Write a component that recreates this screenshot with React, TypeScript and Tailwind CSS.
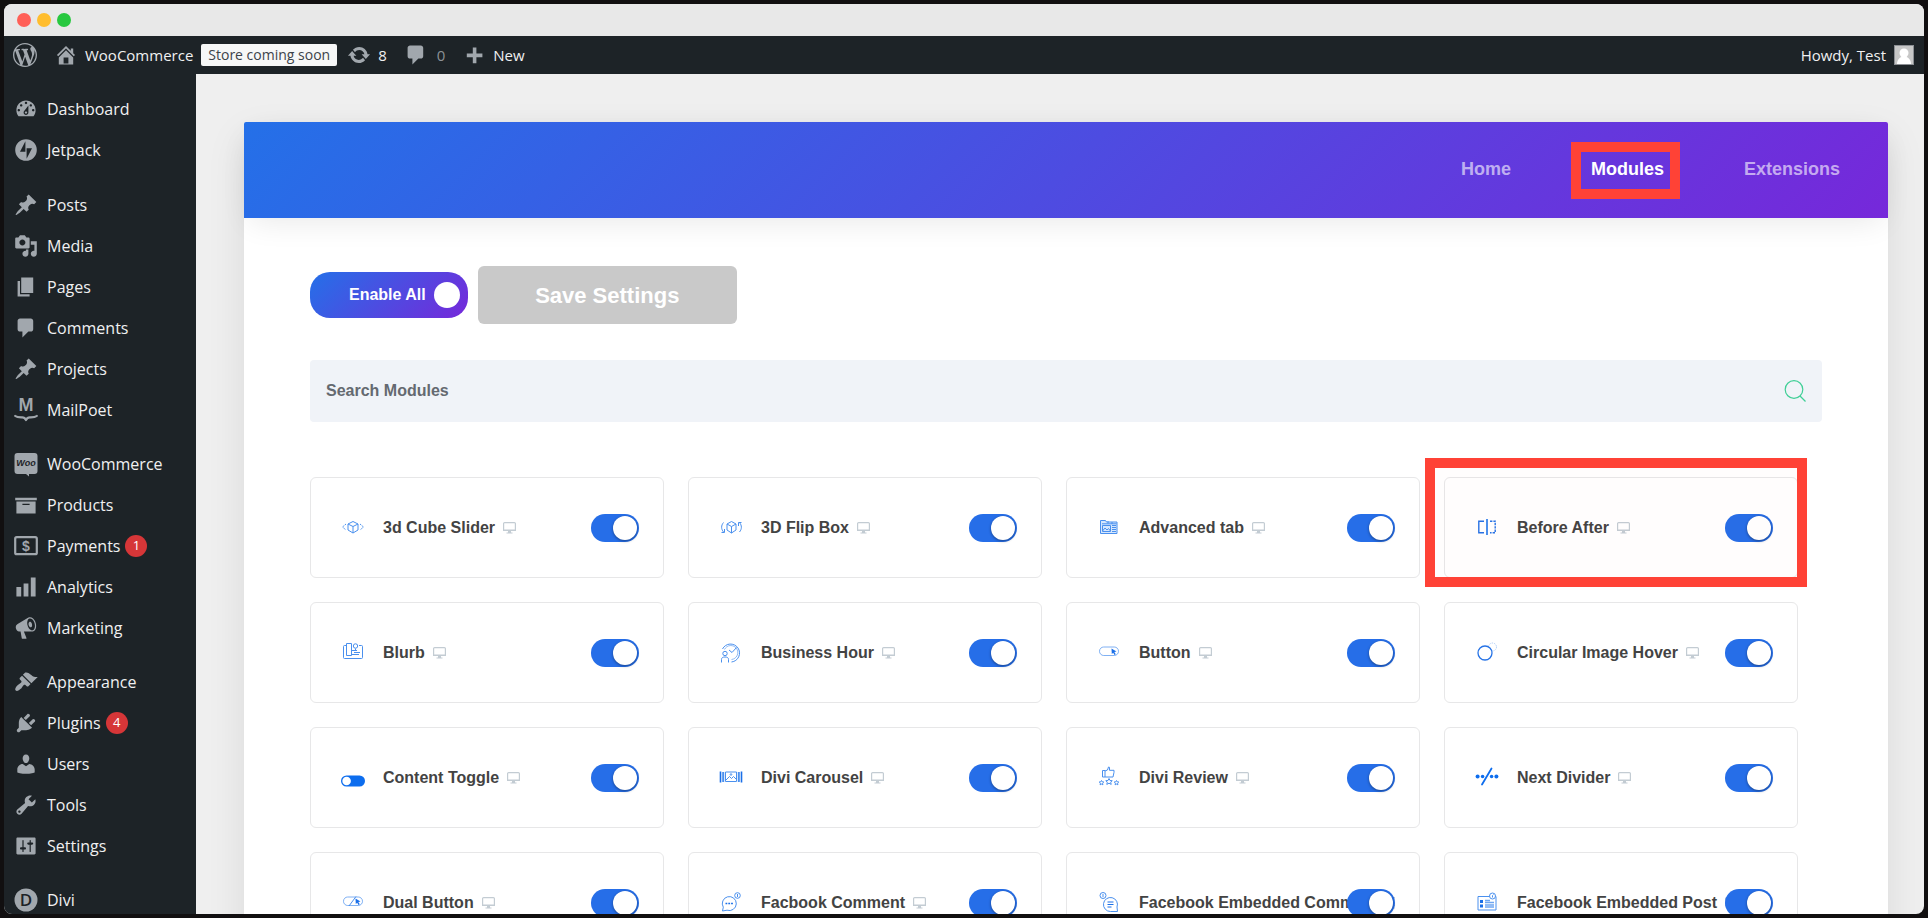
import { useId } from 'react'
import type { ReactNode } from 'react'

type MenuItem = { label: string; icon: ReactNode; badge?: number }
type Module = { name: string; icon: ReactNode; highlighted?: boolean }

const HOME = 'M16 8.5l1.53 1.53-1.06 1.06L10 4.6l-6.47 6.49-1.06-1.06L10 2.5l4 4v-2h2v4zm-6-2.46l6 5.99V18H4v-5.97zM12 17v-5H8v5h4z'
const UPDATE =
  'M10.2 3.28c3.53 0 6.43 2.61 6.92 6h2.08l-3.5 4-3.5-4h2.32c-.45-1.97-2.21-3.45-4.32-3.45-1.45 0-2.73.71-3.54 1.78L4.95 5.66C6.23 4.2 8.11 3.28 10.2 3.28zm-.4 13.44c-3.52 0-6.43-2.61-6.92-6H.8l3.5-4c1.17 1.33 2.33 2.67 3.5 4H5.48c.45 1.97 2.21 3.45 4.32 3.45 1.45 0 2.73-.71 3.54-1.78l1.71 1.95c-1.28 1.46-3.15 2.38-5.25 2.38z'
const COMMENT = 'M5 2h9c1.1 0 2 .9 2 2v7c0 1.1-.9 2-2 2h-2l-5 5v-5H5c-1.1 0-2-.9-2-2V4c0-1.1.9-2 2-2z'
const PLUS = 'M17 8.8v3h-5v5H9v-5H4v-3h5v-5h3v5z'
const WORDPRESS =
  'M20 10c0-5.51-4.49-10-10-10C4.48 0 0 4.49 0 10c0 5.52 4.48 10 10 10 5.51 0 10-4.48 10-10zM7.78 15.37L4.37 6.22c.55-.02 1.17-.08 1.17-.08.5-.06.44-1.13-.06-1.11 0 0-1.45.11-2.37.11-.18 0-.37 0-.58-.01C4.12 2.69 6.87 1.11 10 1.11c2.33 0 4.45.87 6.05 2.34-.68-.11-1.65.39-1.65 1.58 0 .74.45 1.36.9 2.1.35.61.55 1.36.55 2.46 0 1.49-1.4 5-1.4 5l-3.03-8.37c.54-.02.82-.17.82-.17.5-.05.44-1.25-.06-1.22 0 0-1.44.12-2.38.12-.87 0-2.33-.12-2.33-.12-.5-.03-.56 1.2-.06 1.22l.92.08 1.26 3.41zM17.41 10c.24-.64.74-1.87.43-4.25.7 1.29 1.05 2.71 1.05 4.25 0 3.29-1.73 6.24-4.4 7.78.97-2.59 1.94-5.2 2.92-7.78zM6.1 18.09C3.12 16.65 1.11 13.53 1.11 10c0-1.3.23-2.48.72-3.59C3.25 10.3 4.67 14.2 6.1 18.09zm4.03-6.63l2.58 6.98c-.86.29-1.76.45-2.71.45-.79 0-1.57-.11-2.29-.33.81-2.38 1.62-4.74 2.42-7.1z'
const DASHBOARD =
  'M3.76 16h12.48c1.1-1.37 1.76-3.11 1.76-5 0-4.42-3.58-8-8-8s-8 3.58-8 8c0 1.89.66 3.63 1.76 5zM10 4c.55 0 1 .45 1 1s-.45 1-1 1-1-.45-1-1 .45-1 1-1zM6 6c.55 0 1 .45 1 1s-.45 1-1 1-1-.45-1-1 .45-1 1-1zm8 0c.55 0 1 .45 1 1s-.45 1-1 1-1-.45-1-1 .45-1 1-1zm-5.37 5.55L12 7v6c0 1.1-.9 2-2 2s-2-.9-2-2c0-.57.24-1.08.63-1.45zM4 10c.55 0 1 .45 1 1s-.45 1-1 1-1-.45-1-1 .45-1 1-1zm12 0c.55 0 1 .45 1 1s-.45 1-1 1-1-.45-1-1 .45-1 1-1zm-5 3c0-.55-.45-1-1-1s-1 .45-1 1 .45 1 1 1 1-.45 1-1z'
const JETPACK = 'M10 1a9 9 0 100 18 9 9 0 000-18zM9.5 11.5H5L9.5 2.8zm1 5.7V8.5H15z'
const PIN =
  'M10.44 3.02l1.82-1.82 6.36 6.35-1.83 1.82c-1.05-.68-2.48-.57-3.41.36l-.75.75c-.92.93-1.04 2.35-.35 3.41l-1.83 1.82-2.41-2.41-2.8 2.79c-.42.42-3.38 2.71-3.8 2.29s1.86-3.39 2.28-3.81l2.79-2.79L4.1 9.36l1.83-1.82c1.05.69 2.48.57 3.4-.36l.75-.75c.93-.92 1.05-2.35.36-3.41z'
const MEDIA =
  'M13 11V4c0-.55-.45-1-1-1h-1.67L9 1H5L3.67 3H2c-.55 0-1 .45-1 1v7c0 .55.45 1 1 1h10c.55 0 1-.45 1-1zM7 4.5c1.38 0 2.5 1.12 2.5 2.5S8.38 9.5 7 9.5 4.5 8.38 4.5 7 5.62 4.5 7 4.5zM14 6h5v10.5c0 1.38-1.12 2.5-2.5 2.5S14 17.88 14 16.5s1.12-2.5 2.5-2.5c.17 0 .34.02.5.05V9h-3V6zm-4 8.05V13h2v3.5c0 1.38-1.12 2.5-2.5 2.5S7 17.88 7 16.5 8.12 14 9.5 14c.17 0 .34.02.5.05z'
const PAGES = 'M6 15V2h10v13H6zm-1 1h8v2H3V5h2v11z'
const ARCHIVE = 'M19 4v2H1V4h18zM2 7h16v10H2V7zm11 3V9H7v1h6z'
const CHART = 'M18 18V2h-4v16h4zm-6 0V7H8v11h4zm-6 0v-8H2v8h4z'
const MEGAPHONE =
  'M18.15 5.94c.46 1.62.38 3.22-.02 4.48-.42 1.28-1.26 2.18-2.3 2.48-.16.06-.26.06-.4.06-.06.02-.12.02-.18.02-.06.02-.14.02-.22.02h-6.8l2.22 5.5c.02.14-.06.26-.14.34-.08.1-.24.16-.34.16H6.95c-.1 0-.26-.06-.34-.16-.08-.08-.16-.2-.14-.34l-1-5.5H4.25l-.02-.02c-.5.06-1.08-.18-1.54-.62s-.88-1.08-1.06-1.88c-.24-.8-.2-1.56-.02-2.2.18-.62.58-1.08 1.06-1.3l.02-.02 9-5.4c.1-.06.18-.1.24-.16.06-.04.14-.08.24-.12.16-.08.28-.12.5-.18 1.04-.3 2.24.1 3.22.98s1.84 2.24 2.26 3.86zm-2.58 5.98h-.02c.4-.1.74-.34 1.04-.7.58-.7.86-1.76.86-3.04 0-.64-.1-1.3-.28-1.98-.34-1.36-1.02-2.5-1.78-3.24s-1.68-1.1-2.46-.88c-.82.22-1.4.96-1.7 2-.32 1.04-.28 2.36.06 3.72.38 1.36 1 2.5 1.8 3.24.78.74 1.62 1.1 2.48.88zm-2.54-7.08c.22-.04.42-.02.62.04.38.16.76.48 1.02 1s.42 1.2.42 1.78c0 .3-.04.56-.12.8-.18.48-.44.84-.86.94-.34.1-.8-.06-1.14-.4s-.64-.86-.78-1.5c-.18-.62-.12-1.24.02-1.72s.48-.84.82-.94z'
const BRUSH =
  'M14.48 11.06L7.41 3.99l1.5-1.5c.5-.56 2.3-.47 3.51.32 1.21.8 1.43 1.28 2.91 2.1 1.18.64 2.45 1.26 4.45.85zm-.71.71L6.7 4.7 4.93 6.47c-.39.39-.39 1.02 0 1.41l1.06 1.06c.39.39.39 1.03 0 1.42-.6.6-1.43 1.11-2.21 1.69-.35.26-.7.53-1.01.84C1.43 14.23.4 16.08 1.4 17.07c.99 1 2.84-.03 4.18-1.36.31-.31.58-.66.85-1.02.57-.78 1.08-1.61 1.69-2.21.39-.39 1.02-.39 1.41 0l1.06 1.06c.39.39 1.02.39 1.41 0z'
const PLUG =
  'M13.11 4.36L9.87 7.6 8 5.73l3.24-3.24c.35-.34 1.05-.2 1.56.32.52.51.66 1.21.31 1.55zm-8 1.77l.91-1.12 9.01 9.01-1.19.84c-.71.71-2.63 1.16-3.82 1.16H6.14L4.9 17.26c-.59.59-1.54.59-2.12 0-.59-.58-.59-1.53 0-2.12l1.24-1.24v-3.88c0-1.13.4-3.19 1.09-3.89zm7.26 3.97l3.24-3.24c.34-.35 1.04-.21 1.55.31.52.51.66 1.21.31 1.55l-3.24 3.25z'
const USER =
  'M10 9.25c-2.27 0-2.73-3.44-2.73-3.44C7 4.02 7.82 2 9.97 2c2.16 0 2.98 2.02 2.71 3.81 0 0-.41 3.44-2.68 3.44zm0 2.57L12.72 10c2.39 0 4.52 2.33 4.52 4.53v2.49s-3.65 1.13-7.24 1.13c-3.65 0-7.24-1.13-7.24-1.13v-2.49c0-2.25 1.94-4.48 4.47-4.48z'
const WRENCH =
  'M16.68 9.77c-1.34 1.34-3.3 1.67-4.95.99l-5.41 6.52c-.99.99-2.59.99-3.58 0s-.99-2.59 0-3.57l6.52-5.42c-.68-1.65-.35-3.61.99-4.95 1.28-1.28 3.12-1.62 4.72-1.06l-2.89 2.89 2.82 2.82 2.86-2.87c.53 1.58.18 3.39-1.08 4.65zM3.81 16.21c.4.39 1.04.39 1.43 0 .4-.4.4-1.04 0-1.43-.39-.4-1.03-.4-1.43 0-.39.39-.39 1.03 0 1.43z'
const SLIDERS =
  'M18 16V4c0-.55-.45-1-1-1H3c-.55 0-1 .45-1 1v12c0 .55.45 1 1 1h14c.55 0 1-.45 1-1zM8 11h1c.55 0 1 .45 1 1s-.45 1-1 1H8v1.5c0 .28-.22.5-.5.5s-.5-.22-.5-.5V13H6c-.55 0-1-.45-1-1s.45-1 1-1h1V5.5c0-.28.22-.5.5-.5s.5.22.5.5V11zm5-2h-1c-.55 0-1-.45-1-1s.45-1 1-1h1V5.5c0-.28.22-.5.5-.5s.5.22.5.5V7h1c.55 0 1 .45 1 1s-.45 1-1 1h-1v5.5c0 .28-.22.5-.5.5s-.5-.22-.5-.5V9z'

function Dashicon({ d }: { d: string }) {
  return (
    <svg viewBox="0 0 20 20" className="size-6 shrink-0 fill-[#a1a7ad]" fillRule="evenodd" aria-hidden>
      <path d={d} />
    </svg>
  )
}

function MenuArt({ children }: { children: ReactNode }) {
  return (
    <svg viewBox="0 0 24 24" className="size-6 shrink-0 overflow-visible fill-[#a1a7ad]" aria-hidden>
      {children}
    </svg>
  )
}

/* Thin blue line art shown at the left of each module card */
function Art({ children }: { children: ReactNode }) {
  return (
    <svg viewBox="0 0 24 24" className="size-6 shrink-0" fill="none" stroke="#4a90ee" strokeWidth="1" aria-hidden>
      {children}
    </svg>
  )
}

const MENU: MenuItem[][] = [
  [
    { label: 'Dashboard', icon: <Dashicon d={DASHBOARD} /> },
    { label: 'Jetpack', icon: <Dashicon d={JETPACK} /> },
  ],
  [
    { label: 'Posts', icon: <Dashicon d={PIN} /> },
    { label: 'Media', icon: <Dashicon d={MEDIA} /> },
    { label: 'Pages', icon: <Dashicon d={PAGES} /> },
    { label: 'Comments', icon: <Dashicon d={COMMENT} /> },
    { label: 'Projects', icon: <Dashicon d={PIN} /> },
    {
      label: 'MailPoet',
      icon: (
        <MenuArt>
          <text x="12" y="13" textAnchor="middle" className="font-['Liberation_Sans',sans-serif] text-[18px] font-bold">
            M
          </text>
          <path
            d="M1.200 18c2 1.600 4.500 1.400 7 1.400 2 0 3 1 3.800 2.600.8-1.600 1.800-2.600 3.800-2.600 2.500 0 5 .2 7-1.400"
            fill="none"
            stroke="#a1a7ad"
            strokeWidth="2.200"
            strokeLinecap="round"
            strokeLinejoin="round"
          />
        </MenuArt>
      ),
    },
  ],
  [
    {
      label: 'WooCommerce',
      icon: (
        <MenuArt>
          <path d="M3.500 1h17a3 3 0 0 1 3 3v15a3 3 0 0 1-3 3H15v2.500L12 22H3.500a3 3 0 0 1-3-3V4a3 3 0 0 1 3-3z" />
          <text x="12" y="14" textAnchor="middle" className="fill-[#1d2327] font-['Liberation_Sans',sans-serif] text-[9px] font-bold italic">
            Woo
          </text>
        </MenuArt>
      ),
    },
    { label: 'Products', icon: <Dashicon d={ARCHIVE} /> },
    {
      label: 'Payments',
      badge: 1,
      icon: (
        <MenuArt>
          <rect x="1.200" y="3.200" width="21.600" height="17" rx="1.500" fill="none" stroke="#a1a7ad" strokeWidth="2.200" />
          <text x="12" y="17" textAnchor="middle" className="font-['Liberation_Sans',sans-serif] text-[14px] font-bold">
            $
          </text>
        </MenuArt>
      ),
    },
    { label: 'Analytics', icon: <Dashicon d={CHART} /> },
    { label: 'Marketing', icon: <Dashicon d={MEGAPHONE} /> },
  ],
  [
    { label: 'Appearance', icon: <Dashicon d={BRUSH} /> },
    { label: 'Plugins', badge: 4, icon: <Dashicon d={PLUG} /> },
    { label: 'Users', icon: <Dashicon d={USER} /> },
    { label: 'Tools', icon: <Dashicon d={WRENCH} /> },
    { label: 'Settings', icon: <Dashicon d={SLIDERS} /> },
  ],
  [
    {
      label: 'Divi',
      icon: (
        <MenuArt>
          <circle cx="12" cy="12" r="11.500" />
          <text x="12" y="18" textAnchor="middle" className="fill-[#1d2327] font-['Open_Sans',sans-serif] text-[17px] font-semibold">
            D
          </text>
        </MenuArt>
      ),
    },
  ],
]

const MODULES: Module[] = [
  {
    name: '3d Cube Slider',
    icon: (
      <Art>
        <path d="M12 5.500l5 2.500v6l-5 3-5-3V8zM7 8l5 2.500L17 8M12 10.500V17" />
        <path d="M5 8l-3.500 3L5 14M19 8l3.500 3-3.500 3" strokeDasharray="1.500 .8" />
      </Art>
    ),
  },
  {
    name: '3D Flip Box',
    icon: (
      <Art>
        <path d="M12.500 5.500l4.500 2.500v6l-4.500 3L8 14V8zM8 8l4.500 2.500L17 8M12.500 10.500V17" />
        <path d="M4.500 6.500c-2.500 3-2.500 6.500 0 9.500M5.500 13v3.500h-3M20.500 6.500c2.500 3 2.500 6.500 0 9.500M19.500 10V6.500h3" />
      </Art>
    ),
  },
  {
    name: 'Advanced tab',
    icon: (
      <Art>
        <path d="M3.500 4.500h5l1 1.500h10.500v11.500H3.500z" fill="#d6e7fd" />
        <path d="M5.500 9.500h8v6h-8zM5.500 15l2.500-3 2 2 1.500-1.500 2 2.500M15 9.500h4M15 11.500h4M15 13.500h4M15 15.500h4M11 5v2.500M15 6v2M5 7.800h14.500" />
      </Art>
    ),
  },
  {
    name: 'Before After',
    highlighted: true,
    icon: (
      <Art>
        <g stroke="#2673e6" strokeWidth="1.400">
          <path d="M9 5.200H3.800v11.600H9" />
          <path d="M15 5.200h5.200v11.600H15" strokeDasharray="2.400 1" />
          <path d="M12 3v16" strokeWidth="2" stroke="#4a90ee" />
        </g>
      </Art>
    ),
  },
  {
    name: 'Blurb',
    icon: (
      <Art>
        <path d="M5 4.500H3.500a1 1 0 0 0-1 1v11a1 1 0 0 0 1 1h17a1 1 0 0 0 1-1v-11a1 1 0 0 0-1-1H18" />
        <path d="M5.500 2.500h5v12h-5z" />
        <circle cx="14.500" cy="5" r="2.200" />
        <path d="M11 9.500h5M13 11.500h6M11 13.500h7M14.500 7.500v2" />
      </Art>
    ),
  },
  {
    name: 'Business Hour',
    icon: (
      <Art>
        <path d="M3.500 8a9 9 0 1 1 9 13" />
        <path d="M5.500 8.500a7 7 0 1 1 7 10" strokeOpacity=".6" />
        <path d="M10 9l3 2.500 4.500-5" />
        <circle cx="6" cy="12.500" r="2.200" />
        <path d="M2.500 21.500v-3c0-2 1.500-2.500 3.500-2.500s3.500.5 3.500 2.500v3" />
      </Art>
    ),
  },
  {
    name: 'Button',
    icon: (
      <Art>
        <rect x="2.500" y="6" width="19" height="8.500" rx="4.200" strokeOpacity=".7" />
        <path d="M14.500 7.500l5 3-2.200.5 1.500 2.200-1.300.8-1.300-2.200-1.400 1.200z" fill="#1a6fe8" stroke="none" />
      </Art>
    ),
  },
  {
    name: 'Circular Image Hover',
    icon: (
      <Art>
        <circle cx="17.500" cy="6" r="4" strokeOpacity=".4" strokeDasharray="1.500 1" />
        <circle cx="10" cy="12" r="7" fill="#fff" stroke="#2673e6" strokeWidth="1.300" />
      </Art>
    ),
  },
  {
    name: 'Content Toggle',
    icon: (
      <Art>
        <rect x="0" y="9.500" width="24" height="11" rx="5.500" fill="#0d6dee" stroke="none" />
        <circle cx="5.600" cy="15" r="4.300" fill="#fff" stroke="none" />
      </Art>
    ),
  },
  {
    name: 'Divi Carousel',
    icon: (
      <Art>
        <path d="M6.500 6h11v9.500h-11zM7 14l3.500-3.500 2 2 2-2L17 13" />
        <circle cx="12" cy="8.500" r=".8" />
        <path d="M1.500 5.500v11M22.500 5.500v11" stroke="#1a6fe8" strokeWidth="1.600" />
        <path d="M4.200 6v10M19.800 6v10" strokeWidth="2" />
      </Art>
    ),
  },
  {
    name: 'Divi Review',
    icon: (
      <Art>
        <path d="M5.500 4.500H8V11H5.500zM8 5l2.500-1 1-3 1 .3v3H17v2L16 11H8" />
        <path d="M12 12.500l1 2 2.200.2-1.500 1.500.5 2.200-2.200-1.200-2.200 1.200.5-2.200-1.500-1.500 2.200-.2z" />
        <path d="M4.500 14.500l.7 1.300 1.600.2-1.200 1.200.3 1.600-1.400-.7-1.400.7.3-1.600L2.200 16l1.600-.2zM19.500 14.500l.7 1.300 1.600.2-1.200 1.200.3 1.600-1.400-.7-1.400.7.3-1.600-1.200-1.200 1.600-.2z" />
      </Art>
    ),
  },
  {
    name: 'Next Divider',
    icon: (
      <Art>
        <g fill="#0d6dee" stroke="none">
          <circle cx="2.600" cy="10.500" r="2" />
          <circle cx="7.600" cy="10.500" r="1.800" />
          <circle cx="16.600" cy="10.500" r="1.800" />
          <circle cx="21.400" cy="10.500" r="2" />
        </g>
        <path d="M7 18.500l9.500-16" stroke="#0d6dee" strokeWidth="1.800" strokeLinecap="round" />
      </Art>
    ),
  },
  {
    name: 'Dual Button',
    icon: (
      <Art>
        <rect x="2.500" y="6" width="19" height="8.500" rx="4.200" strokeOpacity=".7" />
        <path d="M8 15l7-9.500" />
        <path d="M14.500 7.500l5 3-2.200.5 1.500 2.200-1.300.8-1.300-2.200-1.400 1.200z" fill="#1a6fe8" stroke="none" />
      </Art>
    ),
  },
  {
    name: 'Facbook Comment',
    icon: (
      <Art>
        <path d="M3.500 20l.8-3.800A7 7 0 1 1 8 19.200z" />
        <path d="M6.500 12.500h1.800M9.300 12.500h1.800M12.100 12.500h1.800" stroke="#1a6fe8" strokeWidth="1.600" />
        <circle cx="18.500" cy="4.500" r="2.800" />
        <path d="M18.500 3v3" />
      </Art>
    ),
  },
  {
    name: 'Facebook Embedded Comment',
    icon: (
      <Art>
        <path d="M20.500 20.500h-7A7 7 0 1 1 20 16z" />
        <path d="M10.500 11h6M10.500 13.500h6M10.500 16h4" stroke="#1a6fe8" />
        <circle cx="6" cy="4.500" r="3" />
        <path d="M6 3v3" />
      </Art>
    ),
  },
  {
    name: 'Facebook Embedded Post',
    icon: (
      <Art>
        <path d="M3 5.500h18V19H3z" />
        <path d="M5 9h3v3H5zM5 13.500h3v3H5z" fill="#1a6fe8" stroke="none" />
        <path d="M10 9.500h5M10 11.500h9M10 14h9M10 16h9" strokeOpacity=".8" strokeWidth="1.400" />
        <circle cx="17.500" cy="5" r="3" fill="#fff" />
        <path d="M17.500 6.500v-2l1-1" />
      </Art>
    ),
  },
]

function AdminBar() {
  return (
    <header className="flex h-[38px] shrink-0 items-center bg-[#1d2327] pr-[10px] pl-[9px] text-[15px] text-[#f0f0f1]">
      <a href="#about" aria-label="About WordPress">
        <Dashicon d={WORDPRESS} />
      </a>
      <a href="#site" className="ml-[17px] flex items-center gap-[7px]">
        <Dashicon d={HOME} />
        WooCommerce
      </a>
      <a href="#visibility" className="ml-2 rounded-xs bg-[#f6f7f7] px-[7px] text-[14px] leading-[22px] font-medium text-[#3c434a]">
        Store coming soon
      </a>
      <a href="#updates" className="ml-[10px] flex items-center gap-[7px]">
        <Dashicon d={UPDATE} />8
      </a>
      <a href="#comments" className="ml-[17px] flex items-center gap-[9px] text-[#8c9196]">
        <Dashicon d={COMMENT} />0
      </a>
      <a href="#new" className="ml-[17px] flex items-center gap-[7px]">
        <Dashicon d={PLUS} />
        New
      </a>
      <a href="#profile" className="ml-auto flex items-center gap-2">
        Howdy, Test
        <svg viewBox="0 0 20 20" className="size-5" aria-hidden>
          <path d="M0 0h20v20H0z" fill="#8c8f94" />
          <path d="M1 1h18v18H1z" fill="#c7c7c7" />
          <circle cx="10" cy="8" r="4.500" fill="#fff" />
          <path d="M3 19c0-4 2.500-6.500 4.500-7h5c2 .5 4.500 3 4.500 7z" fill="#fff" />
        </svg>
      </a>
    </header>
  )
}

function Sidebar() {
  return (
    <nav className="flex w-48 shrink-0 flex-col gap-[13px] overflow-hidden bg-[#1d2327] pt-[14px] text-base text-[#f0f0f1]">
      {MENU.map((group, i) => (
        <ul key={i} className="first:mb-px">
          {group.map((item) => (
            <li key={item.label}>
              <a href={`#${item.label.toLowerCase()}`} className="flex h-[41px] items-center pl-[10px]">
                {item.icon}
                <span className="ml-[9px]">{item.label}</span>
                {item.badge && (
                  <span className="ml-[5px] flex size-[22px] items-center justify-center rounded-full bg-[#d63638] text-[13px] text-white">
                    {item.badge}
                  </span>
                )}
              </a>
            </li>
          ))}
        </ul>
      ))}
    </nav>
  )
}

function ModuleCard({ name, icon, highlighted }: Module) {
  const id = useId()
  return (
    <div className="relative flex h-[101px] items-center rounded-md border border-[#e7e7e8] pr-6 pl-[30px]">
      {icon}
      <div className="ml-[18px] flex min-w-0 flex-1 items-center gap-2 overflow-hidden">
        <label htmlFor={id} className="whitespace-nowrap">
          {name}
        </label>
        <svg viewBox="0 0 13 12" className="h-3 w-[13px] shrink-0" aria-hidden>
          <path d="M1.600.6h9.800a1 1 0 0 1 1 1v6.900H.6V1.600a1 1 0 0 1 1-1z" fill="none" stroke="#c3ccd3" strokeWidth="1.200" />
          <path d="M.5 7.500h12V9H.5zM5 9h3v1.500h1.500v1h-6v-1H5z" fill="#c3ccd3" />
        </svg>
      </div>
      {/* the switch sits on top of long names */}
      <input
        id={id}
        type="checkbox"
        role="switch"
        defaultChecked
        className="relative -ml-12 h-7 w-12 shrink-0 cursor-pointer appearance-none rounded-full bg-[#c9c9c9] before:absolute before:top-0.5 before:left-0.5 before:size-6 before:rounded-full before:bg-white before:shadow-[0_1px_3px_rgba(0,0,0,0.4)] checked:bg-[#266ee8] checked:before:left-[22px]"
      />
      {highlighted && (
        <div
          aria-hidden
          className="pointer-events-none absolute -top-5 -right-[10px] -bottom-[10px] -left-5 border-[10px] border-[#ff4236] bg-[#ff4236]/1"
        />
      )}
    </div>
  )
}

export default function App() {
  return (
    <div className="h-screen bg-[#110f10] p-1 font-['Open_Sans','Noto_Sans',sans-serif]">
      <div className="flex h-full flex-col overflow-hidden rounded-lg bg-[#efefef]">
        <div className="flex h-8 shrink-0 items-center gap-[6px] bg-[#e8e8e8] px-[13px]">
          <span className="size-[14px] rounded-full bg-[#ff5f57]" />
          <span className="size-[14px] rounded-full bg-[#ffbd2e]" />
          <span className="size-[14px] rounded-full bg-[#28c840]" />
        </div>
        <AdminBar />
        <div className="flex min-h-0 flex-1">
          <Sidebar />
          <main className="min-w-0 flex-1 overflow-hidden pt-12 pr-9 pl-12 font-['Liberation_Sans',Arial,sans-serif] font-bold">
            <div className="min-h-full rounded-t-xs bg-white shadow-[0_15px_40px_rgba(0,0,0,0.09)]">
              <nav className="flex h-24 items-center justify-end gap-20 rounded-t-xs bg-[linear-gradient(135deg,#2470e8,#7628da)] px-12 pb-0.5 text-lg text-white/60 shadow-[0_10px_30px_-6px_rgba(0,0,0,0.09)]">
                <a href="#home">Home</a>
                <a href="#modules" aria-current="page" className="relative text-white">
                  Modules
                  <span
                    aria-hidden
                    className="pointer-events-none absolute -top-[13px] -right-4 -bottom-4 -left-5 border-[10px] border-[#ff4236]"
                  />
                </a>
                <a href="#extensions">Extensions</a>
              </nav>

              <div className="px-[66px] pt-12">
                <div className="flex items-center gap-[10px]">
                  <label className="flex h-[46px] cursor-pointer items-center gap-2 rounded-[20px] bg-[linear-gradient(135deg,#2470e8,#7628da)] pr-2 pl-[39px] text-base text-white">
                    Enable All
                    <input type="checkbox" defaultChecked className="size-[26px] cursor-pointer appearance-none rounded-full bg-white" />
                  </label>
                  <button type="button" className="h-[58px] w-[259px] rounded-md bg-[#c9c9c9] text-[22px] text-white">
                    Save Settings
                  </button>
                </div>

                <div className="mt-9 flex h-[62px] items-center rounded-sm bg-[#f0f3f8] pr-4 pl-4">
                  <input
                    type="search"
                    aria-label="Search Modules"
                    placeholder="Search Modules"
                    className="flex-1 text-base outline-none placeholder:text-[#646970]"
                  />
                  <svg viewBox="0 0 22 22" className="size-[22px]" fill="none" stroke="#3fcf96" strokeWidth="1.200" aria-hidden>
                    <circle cx="10" cy="9.500" r="8.800" />
                    <path d="M16 16l5.500 5.500" />
                  </svg>
                </div>

                <div className="mt-[55px] grid grid-cols-4 gap-6 pr-6 text-base text-[#434343]">
                  {MODULES.map((module) => (
                    <ModuleCard key={module.name} {...module} />
                  ))}
                </div>
              </div>
            </div>
          </main>
        </div>
      </div>
    </div>
  )
}
